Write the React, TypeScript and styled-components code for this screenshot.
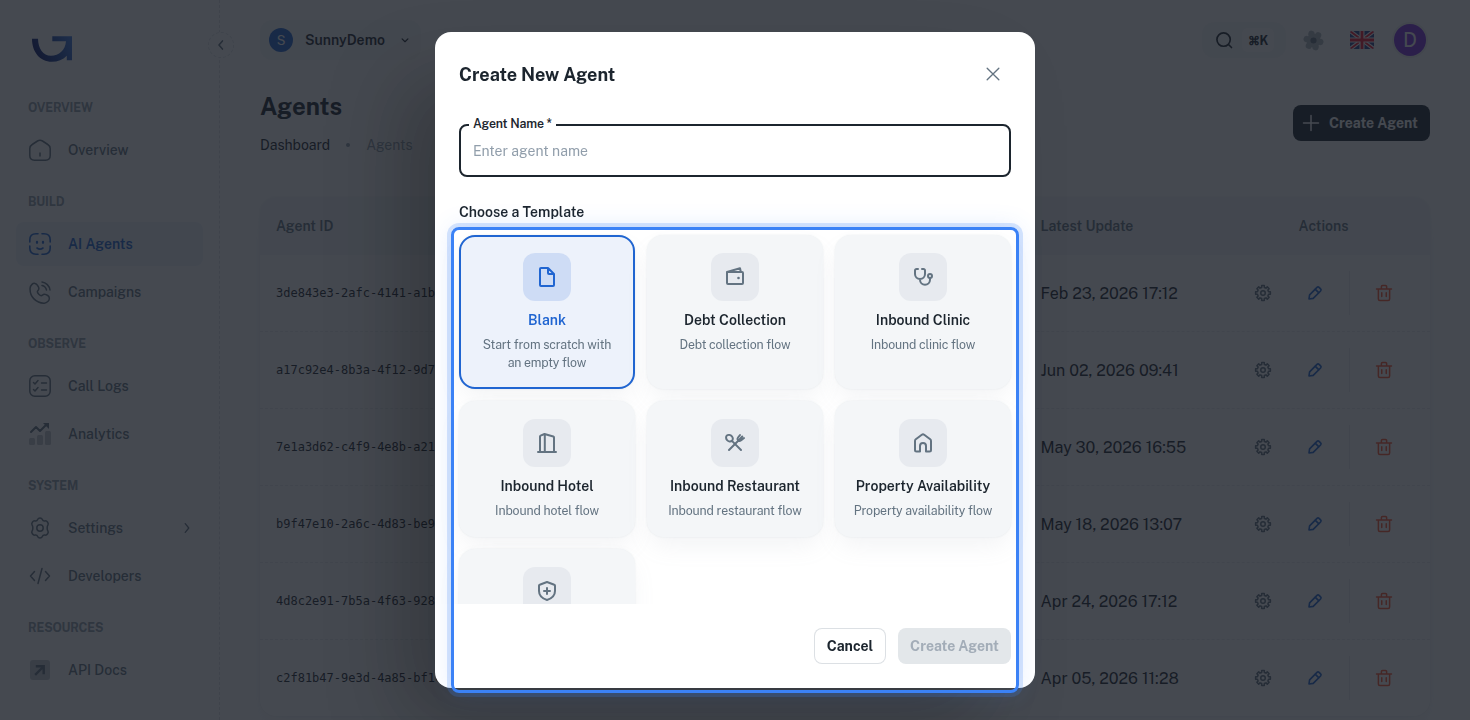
import React, { useState, ReactNode } from 'react';
import styled, { createGlobalStyle, css } from 'styled-components';

interface Template {
  id: string;
  name: string;
  description: string;
  icon: ReactNode;
}

interface Agent {
  id: string;
  updated: string;
}

interface NavEntry {
  label: string;
  icon: ReactNode;
  active?: boolean;
  expandable?: boolean;
}

interface NavGroup {
  title: string;
  items: NavEntry[];
}

const GlobalStyle = createGlobalStyle`
  * {
    box-sizing: border-box;
  }

  body {
    margin: 0;
    height: 100vh;
    overflow: hidden;
    background: #ffffff;
    color: #1c252e;
    font-family: 'Public Sans', Roboto, 'Liberation Sans', sans-serif;
    font-size: 14px;
  }

  button, input {
    font-family: inherit;
  }
`;

const smallText = css`
  font-size: 12.3px;
  letter-spacing: -0.14px;
`;

/* ---------- page ---------- */

const Page = styled.div`
  display: flex;
  height: 720px;
  overflow: hidden;
`;

const Sidebar = styled.aside`
  position: relative;
  width: 220px;
  flex-shrink: 0;
  padding: 0 16px;
  border-right: 1px dashed rgba(145, 158, 171, 0.3);
`;

const LogoArea = styled.div`
  height: 78px;
  padding: 36px 0 0 16px;
`;

const CollapseButton = styled.button`
  position: absolute;
  top: 32px;
  right: -15px;
  width: 26px;
  height: 26px;
  padding: 0;
  display: flex;
  align-items: center;
  justify-content: center;
  border-radius: 50%;
  border: 1px dashed rgba(145, 158, 171, 0.3);
  background: #ffffff;
  color: #637381;
`;

const NavTitle = styled.div`
  padding: 21px 12px 11px;
  ${smallText}
  line-height: 18px;
  font-weight: 700;
  color: #919eab;
`;

const NavList = styled.div`
  display: flex;
  flex-direction: column;
  gap: 4px;
`;

const NavItem = styled.a<{ $active?: boolean }>`
  display: flex;
  align-items: center;
  width: 187px;
  height: 44px;
  padding: 0 9px 0 12px;
  gap: 16px;
  border-radius: 8px;
  font-weight: 500;
  color: #637381;

  ${({ $active }) =>
    $active &&
    css`
      font-weight: 600;
      color: #2065d1;
      background: rgba(32, 101, 209, 0.08);
    `}
`;

const NavLabel = styled.span`
  flex: 1;
`;

const Main = styled.main`
  flex: 1;
  padding: 0 40px;
`;

const TopBar = styled.header`
  display: flex;
  align-items: center;
  justify-content: space-between;
  height: 80px;
`;

const Workspace = styled.button`
  display: flex;
  align-items: center;
  width: 161px;
  height: 40px;
  padding: 0 9px;
  gap: 12px;
  border: none;
  border-radius: 12px;
  background: rgba(145, 158, 171, 0.08);
  color: #1c252e;
`;

const WorkspaceName = styled.span`
  flex: 1;
  text-align: left;
  font-size: 14px;
  font-weight: 600;
`;

const Avatar = styled.span<{ $size: number; $color: string; $ring?: boolean }>`
  display: flex;
  align-items: center;
  justify-content: center;
  flex-shrink: 0;
  width: ${({ $size }) => $size}px;
  height: ${({ $size }) => $size}px;
  border-radius: 50%;
  font-size: ${({ $size }) => ($size > 24 ? 20 : 13)}px;
  font-weight: 400;
  color: #ffffff;
  background: ${({ $color }) => $color};
  box-shadow: ${({ $ring }) => ($ring ? '0 0 0 2px rgba(145, 158, 171, 0.16)' : 'none')};
`;

const TopActions = styled.div`
  display: flex;
  align-items: center;
  padding-right: 4px;
`;

const SearchButton = styled.button`
  display: flex;
  align-items: center;
  width: 84px;
  height: 36px;
  margin-right: 17px;
  padding: 0 12px;
  gap: 8px;
  border: none;
  border-radius: 12px;
  background: rgba(145, 158, 171, 0.08);
  color: #1c252e;
`;

const Shortcut = styled.kbd`
  width: 32px;
  height: 24px;
  flex-shrink: 0;
  border-radius: 6px;
  background: #ffffff;
  font-family: inherit;
  ${smallText}
  font-weight: 700;
  line-height: 25px;
  text-align: center;
`;

const FlagBox = styled.span`
  display: flex;
  margin: 0 20px 0 26px;
  border-radius: 2px;
  overflow: hidden;
`;

const PageHead = styled.div`
  display: flex;
  justify-content: space-between;
  height: 117px;
  padding-top: 8px;
`;

const PageTitle = styled.h1`
  margin: 0;
  font-size: 24px;
  line-height: 36px;
  font-weight: 700;
`;

const Breadcrumbs = styled.div`
  display: flex;
  align-items: center;
  gap: 16px;
  margin-top: 10px;
  line-height: 22px;
  color: #919eab;
`;

const Crumb = styled.span`
  color: #1c252e;
`;

const Dot = styled.i`
  width: 4px;
  height: 4px;
  border-radius: 50%;
  background: #919eab;
`;

const CreateButton = styled.button`
  display: flex;
  align-items: center;
  width: 137px;
  height: 36px;
  margin-top: 17px;
  padding: 0 0 0 8px;
  gap: 8px;
  border: none;
  border-radius: 8px;
  background: #1c252e;
  color: #ffffff;
  font-size: 14px;
  font-weight: 700;
`;

const TableCard = styled.section`
  width: 1170px;
  height: 519px;
  border-radius: 16px;
  overflow: hidden;
  background: #ffffff;
  box-shadow: 0 0 2px rgba(145, 158, 171, 0.2), 0 12px 24px -4px rgba(145, 158, 171, 0.12);
`;

const Row = styled.div<{ $head?: boolean }>`
  display: grid;
  grid-template-columns: 764.5px 192.5px 213px;
  align-items: center;
  height: ${({ $head }) => ($head ? 58 : 77)}px;
  border-bottom: ${({ $head }) => ($head ? 'none' : '1px dashed rgba(145, 158, 171, 0.2)')};

  &:last-child {
    border-bottom-color: transparent;
  }

  ${({ $head }) =>
    $head &&
    css`
      background: #f4f6f8;
      color: #637381;
      font-weight: 600;
    `}
`;

const Cell = styled.div<{ $center?: boolean }>`
  padding: 0 16px;
  text-align: ${({ $center }) => ($center ? 'center' : 'left')};
`;

const AgentId = styled(Cell)`
  font-family: 'DejaVu Sans Mono', monospace;
  font-size: 12px;
`;

const DateCell = styled(Cell)`
  font-size: 16px;
  white-space: nowrap;
`;

const RowActions = styled.div`
  display: flex;
  align-items: center;
  justify-content: center;
  gap: 16px;
`;

const IconButton = styled.button<{ $color: string }>`
  display: flex;
  align-items: center;
  justify-content: center;
  width: 36px;
  height: 36px;
  padding: 0;
  border: none;
  background: none;
  color: ${({ $color }) => $color};
`;

const Divider = styled.span`
  width: 1px;
  height: 44px;
  background: rgba(145, 158, 171, 0.2);
`;

/* ---------- dialog ---------- */

const Backdrop = styled.div`
  position: fixed;
  inset: 0;
  display: flex;
  align-items: center;
  justify-content: center;
  background: rgba(22, 28, 36, 0.8);
`;

const Dialog = styled.div`
  display: flex;
  flex-direction: column;
  width: 600px;
  height: 656px;
  border-radius: 16px;
  overflow: hidden;
  background: #ffffff;
  box-shadow: -40px 40px 80px -8px rgba(0, 0, 0, 0.24);
`;

const DialogHeader = styled.div`
  display: flex;
  align-items: center;
  justify-content: space-between;
  padding: 24px 24px 0;
  height: 60px;
`;

const DialogTitle = styled.h2`
  margin: 0;
  padding-top: 2px;
  font-size: 18px;
  line-height: 28px;
  font-weight: 700;
`;

const DialogBody = styled.div`
  flex: 1;
  padding: 32px 24px 0;
  overflow: hidden;
`;

const Field = styled.div`
  position: relative;
`;

const FieldLabel = styled.label`
  position: absolute;
  top: -8px;
  left: 10px;
  width: 87px;
  padding-left: 4px;
  background: #ffffff;
  ${smallText}
  line-height: 16px;
  font-weight: 600;
`;

const FieldInput = styled.input`
  display: block;
  width: 100%;
  height: 53px;
  padding: 0 12px;
  border: 2px solid #1c252e;
  border-radius: 8px;
  outline: none;
  font-size: 14px;

  &::placeholder {
    color: #919eab;
  }
`;

const SectionLabel = styled.div`
  margin: 24px 0 12px;
  font-size: 14px;
  line-height: 22px;
  font-weight: 600;
`;

const TemplateGrid = styled.div`
  display: grid;
  grid-template-columns: repeat(3, 176px);
  gap: 12px;
`;

const TemplateIcon = styled.span<{ $selected: boolean }>`
  display: flex;
  align-items: center;
  justify-content: center;
  width: 48px;
  height: 48px;
  border-radius: 12px;
  color: ${({ $selected }) => ($selected ? '#2065d1' : '#637381')};
  background: ${({ $selected }) => ($selected ? '#cedcf5' : '#e7eaef')};
`;

const TemplateName = styled.span<{ $selected: boolean }>`
  margin-top: 8px;
  font-size: 14px;
  line-height: 22px;
  font-weight: 600;
  white-space: nowrap;
  color: ${({ $selected }) => ($selected ? '#2065d1' : '#1c252e')};
`;

const TemplateText = styled.span`
  margin: 5px 0 -1px;
  ${smallText}
  line-height: 18px;
  color: #637381;
`;

const TemplateCard = styled.div<{ $selected: boolean }>`
  display: flex;
  flex-direction: column;
  align-items: center;
  padding: 16px;
  border: 2px solid ${({ $selected }) => ($selected ? '#2065d1' : 'transparent')};
  border-radius: 16px;
  background: ${({ $selected }) => ($selected ? '#edf2fb' : '#f4f6f8')};
  box-shadow: 0 0 2px rgba(145, 158, 171, 0.2), 0 12px 24px -4px rgba(145, 158, 171, 0.12);
  text-align: center;
  cursor: pointer;
`;

const DialogFooter = styled.div`
  display: flex;
  justify-content: flex-end;
  gap: 12px;
  padding: 24px;
`;

const FooterButton = styled.button<{ $width: number }>`
  width: ${({ $width }) => $width}px;
  height: 36px;
  padding: 0;
  border: 1px solid rgba(145, 158, 171, 0.32);
  border-radius: 8px;
  background: #ffffff;
  color: #1c252e;
  font-size: 14px;
  font-weight: 700;

  &:disabled {
    border-color: transparent;
    background: #e3e7ea;
    color: #a3adb8;
  }
`;

const FocusRing = styled.div`
  position: fixed;
  top: 227px;
  left: 451px;
  width: 568px;
  height: 466px;
  border: 3px solid #3b82f6;
  border-radius: 8px;
  box-shadow: 0 0 0 4px rgba(59, 130, 246, 0.2), 0 0 24px rgba(59, 130, 246, 0.15);
  pointer-events: none;
`;

/* ---------- icons ---------- */

interface IconProps {
  size?: number;
  width?: number;
  children: ReactNode;
}

const Icon: React.FC<IconProps> = ({ size = 24, width = 1.5, children }) => (
  <svg
    width={size}
    height={size}
    viewBox="0 0 24 24"
    fill="none"
    stroke="currentColor"
    strokeWidth={width}
    strokeLinecap="round"
    strokeLinejoin="round"
  >
    {children}
  </svg>
);

const Logo = () => (
  <svg width="40" height="26" viewBox="0 0 40 26">
    <defs>
      <linearGradient id="logo" x1="0" y1="0.6" x2="1" y2="0.3">
        <stop offset="0" stopColor="#0a1266" />
        <stop offset="0.5" stopColor="#173f9c" />
        <stop offset="1" stopColor="#3a74dc" />
      </linearGradient>
    </defs>
    <path
      fill="url(#logo)"
      d="M0 2.800h6C6.300 13 11 19.800 19 19.800c8 0 14.500-6 15-14.600H20.300V.2H40V24.200h-5.200v-4.400c-4 4-9 6-15 6C8 25.800 0 16 0 2.800z"
    />
  </svg>
);

// outline of a gear with eight square teeth, centred on 12,12
const toothOffsets: [number, number][] = [
  [-13.5, 7.6],
  [-10, 10],
  [10, 10],
  [13.5, 7.6],
];

const gearPoints = Array.from({ length: 8 })
  .flatMap((_, i) =>
    toothOffsets.map(([offset, radius]) => {
      const angle = ((i * 45 + offset) * Math.PI) / 180;
      return `${(12 + radius * Math.cos(angle)).toFixed(2)},${(12 + radius * Math.sin(angle)).toFixed(2)}`;
    })
  )
  .join(' ');

const CogIcon = () => (
  <Icon size={18} width={2}>
    <circle cx="12" cy="12" r="3" />
    <polygon points={gearPoints} />
  </Icon>
);

const PencilIcon = () => (
  <Icon size={16} width={2.500}>
    <path d="M3 21l.9-6.300L15 3.600c1-1 2.100-1 3.100 0l2.300 2.300c1 1 1 2.100 0 3.100L9.300 20.100z" />
    <path d="M12.500 6.500l5 5" />
  </Icon>
);

const TrashIcon = () => (
  <Icon size={18} width={2}>
    <path d="M2 6.500h20M4.500 6.500V20a2 2 0 0 0 2 2h11a2 2 0 0 0 2-2V6.500M8.500 6V3.500A1.500 1.500 0 0 1 10 2h4a1.500 1.500 0 0 1 1.500 1.500V6M9 11.500v5M15 11.500v5" />
  </Icon>
);

const FlagIcon = () => (
  <svg width="24" height="18" viewBox="0 0 24 18">
    <rect width="24" height="18" fill="#24408e" />
    <path d="M0 0l24 18M24 0L0 18" stroke="#ffffff" strokeWidth="4" />
    <path d="M0 0l24 18M24 0L0 18" stroke="#f0142f" strokeWidth="1.800" />
    <path d="M12 0v18M0 9h24" stroke="#ffffff" strokeWidth="5" />
    <path d="M12 0v18M0 9h24" stroke="#f0142f" strokeWidth="2.800" />
  </svg>
);

const navGroups: NavGroup[] = [
  {
    title: 'OVERVIEW',
    items: [
      {
        label: 'Overview',
        icon: (
          <Icon>
            <path d="M1.800 10.500c0-1.800.8-3 2.400-4L9.500 3c1.800-1.100 3.200-1.100 5 0l5.300 3.500c1.600 1 2.400 2.200 2.400 4v7c0 3-1.700 4.700-4.700 4.700h-11c-3 0-4.700-1.700-4.700-4.700zM12 15v3" />
          </Icon>
        ),
      },
    ],
  },
  {
    title: 'BUILD',
    items: [
      {
        label: 'AI Agents',
        active: true,
        icon: (
          <Icon width={1.600}>
            <path d="M10 1.800H8c-4.500 0-6.200 1.700-6.200 6.200v2M14 1.800h2c4.500 0 6.200 1.700 6.200 6.200v2M10 22.200H8c-4.500 0-6.200-1.700-6.200-6.200v-2M14 22.200h2c4.500 0 6.200-1.700 6.200-6.200v-2M9 16c1.800 1.300 4.200 1.300 6 0" />
            <path d="M9 9.800v1M15 9.800v1" strokeWidth="2.200" />
          </Icon>
        ),
      },
      {
        label: 'Campaigns',
        icon: (
          <Icon>
            <path d="M14 2c4 .4 7.500 4 8 8M14 5.500c2.300.4 4 2.200 4.500 4.500M9.500 5.300l.9 1.600c.7 1.300.4 2.800-.6 3.800 0 0-1.200 1.300 1 3.500s3.500 1 3.500 1c1-1 2.500-1.300 3.800-.6l1.600.9c2 1.200 2.200 4 .4 5.800-1 1-2.300 1.900-3.800 1.900-2.400.1-6.500-.5-10.600-4.600S2 10.500 2.100 8.100C2.200 6.700 3 5.400 4 4.400c1.700-1.700 4.300-1.200 5.500.9z" />
          </Icon>
        ),
      },
    ],
  },
  {
    title: 'OBSERVE',
    items: [
      {
        label: 'Call Logs',
        icon: (
          <Icon>
            <rect x="1.800" y="1.800" width="20.400" height="20.400" rx="5" />
            <path d="M5.500 8.500l1.500 1.500 3-3.500M5.500 15.500L7 17l3-3.500M13.500 9h5M13.500 16h5" />
          </Icon>
        ),
      },
      {
        label: 'Analytics',
        icon: (
          <Icon>
            <g fill="currentColor" stroke="none" opacity="0.4">
              <rect x="1" y="16" width="6" height="7" rx="1.500" />
              <rect x="9" y="13" width="6" height="10" rx="1.500" />
              <rect x="17" y="9" width="6" height="14" rx="1.500" />
            </g>
            <path d="M3 10l5-5 4 4 6-6" strokeWidth="2" />
            <path d="M15 1h6v6z" fill="currentColor" stroke="none" />
          </Icon>
        ),
      },
    ],
  },
  {
    title: 'SYSTEM',
    items: [
      {
        label: 'Settings',
        expandable: true,
        icon: (
          <Icon>
            <circle cx="12" cy="12" r="3.200" />
            <path d="M9.800 3.200c.6-1.600 3.800-1.600 4.400 0 .5 1.400 1.500 2 3 1.700 1.800-.3 3.800 2.600 2.700 4.100-1 1.300-1 4.700 0 6 1.100 1.500-.9 4.400-2.700 4.100-1.500-.3-2.500.3-3 1.700-.6 1.600-3.800 1.600-4.400 0-.5-1.400-1.500-2-3-1.700-1.800.3-3.800-2.600-2.700-4.100 1-1.300 1-4.700 0-6C3 7.500 5 4.600 6.800 4.900c1.500.3 2.500-.3 3-1.700z" />
          </Icon>
        ),
      },
      {
        label: 'Developers',
        icon: (
          <Icon>
            <path d="M6.500 7.500L2.500 12l4 4.500M17.500 7.500l4 4.500-4 4.500M14 4.500l-4 15" />
          </Icon>
        ),
      },
    ],
  },
  {
    title: 'RESOURCES',
    items: [
      {
        label: 'API Docs',
        icon: (
          <Icon>
            <rect x="2" y="2" width="20" height="20" rx="3" fill="currentColor" stroke="none" opacity="0.4" />
            <path d="M8 16l7-7M9 8.300h6.700V15" strokeWidth="2.400" strokeLinecap="square" strokeLinejoin="miter" />
          </Icon>
        ),
      },
    ],
  },
];

const agents: Agent[] = [
  { id: '3de843e3-2afc-4141-a1b', updated: 'Feb 23, 2026 17:12' },
  { id: 'a17c92e4-8b3a-4f12-9d7', updated: 'Jun 02, 2026 09:41' },
  { id: '7e1a3d62-c4f9-4e8b-a21', updated: 'May 30, 2026 16:55' },
  { id: 'b9f47e10-2a6c-4d83-be9', updated: 'May 18, 2026 13:07' },
  { id: '4d8c2e91-7b5a-4f63-928', updated: 'Apr 24, 2026 17:12' },
  { id: 'c2f81b47-9e3d-4a85-bf1c', updated: 'Apr 05, 2026 11:28' },
];

const templates: Template[] = [
  {
    id: 'blank',
    name: 'Blank',
    description: 'Start from scratch with an empty flow',
    icon: <path d="M13 3H6a1 1 0 0 0-1 1v16a1 1 0 0 0 1 1h12a1 1 0 0 0 1-1V9l-6-6v5a1 1 0 0 0 1 1h5" />,
  },
  {
    id: 'debt',
    name: 'Debt Collection',
    description: 'Debt collection flow',
    icon: (
      <>
        <path d="M4 7h15a1 1 0 0 1 1 1v10a1 1 0 0 1-1 1H5a1 1 0 0 1-1-1V7l13-3.700.8 3.400" />
        <circle cx="15.500" cy="13" r="1.300" fill="currentColor" stroke="none" />
      </>
    ),
  },
  {
    id: 'clinic',
    name: 'Inbound Clinic',
    description: 'Inbound clinic flow',
    icon: (
      <>
        <path d="M7 4H5.500A1.500 1.500 0 0 0 4 5.500V9a5 5 0 0 0 10 0V5.500A1.500 1.500 0 0 0 12.500 4H11M9 14v.7a5 5 0 0 0 10 0V13" />
        <circle cx="19" cy="11" r="2" />
      </>
    ),
  },
  {
    id: 'hotel',
    name: 'Inbound Hotel',
    description: 'Inbound hotel flow',
    icon: <path d="M3 21h18M5 21V5.600a1 1 0 0 1 .6-.9L9.500 3l8.800 2.500a1 1 0 0 1 .7 1V21M9.800 3.500V21" />,
  },
  {
    id: 'restaurant',
    name: 'Inbound Restaurant',
    description: 'Inbound restaurant flow',
    icon: (
      <>
        <path d="M8.900 9.900c-1.300 1-3.500.6-4.800-.8S2.700 5.400 3.900 4.500 7.600 4 8.900 5.400s1.200 3.400 0 4.500zL18 19" />
        <path d="M6 19L15.500 9.500M17 4l-2 2.500c-.8 1-.8 2 0 2.900s2 .9 2.900 0L21 7M19.300 5.500L16 9" />
      </>
    ),
  },
  {
    id: 'property',
    name: 'Property Availability',
    description: 'Property availability flow',
    icon: (
      <path d="M4 9.900a2 2 0 0 1 .8-1.600l6-4.500a2 2 0 0 1 2.400 0l6 4.500a2 2 0 0 1 .8 1.600V19a1.500 1.500 0 0 1-1.500 1.500H15V15a3 3 0 0 0-6 0v5.500H5.500A1.500 1.500 0 0 1 4 19z" />
    ),
  },
  {
    id: 'insurance',
    name: '',
    description: '',
    icon: <path d="M12 3l7.300 2.700a1 1 0 0 1 .7 1V12c0 4.500-3.500 7.500-8 9-4.500-1.500-8-4.500-8-9V6.700a1 1 0 0 1 .7-1zM12 9v6M9 12h6" />,
  },
];

const App: React.FC = () => {
  const [selected, setSelected] = useState<string>('blank');

  return (
    <>
      <GlobalStyle />
      <Page>
        <Sidebar>
          <LogoArea>
            <Logo />
          </LogoArea>
          {navGroups.map((group) => (
            <React.Fragment key={group.title}>
              <NavTitle>{group.title}</NavTitle>
              <NavList>
                {group.items.map((item) => (
                  <NavItem key={item.label} $active={item.active}>
                    {item.icon}
                    <NavLabel>{item.label}</NavLabel>
                    {item.expandable && (
                      <Icon size={14} width={2.200}>
                        <path d="M9 4.500l6 7.500-6 7.500" />
                      </Icon>
                    )}
                  </NavItem>
                ))}
              </NavList>
            </React.Fragment>
          ))}
          <CollapseButton>
            <Icon size={14} width={2.600}>
              <path d="M14.500 5l-6 7 6 7" />
            </Icon>
          </CollapseButton>
        </Sidebar>

        <Main>
          <TopBar>
            <Workspace>
              <Avatar $size={24} $color="#2065d1">S</Avatar>
              <WorkspaceName>SunnyDemo</WorkspaceName>
              <Icon size={14} width={2}>
                <path d="M7 10l5 5 5-5" />
              </Icon>
            </Workspace>
            <TopActions>
              <SearchButton>
                <Icon size={20} width={2}>
                  <circle cx="11.500" cy="11.500" r="8" />
                  <path d="M18 18l3 3" />
                </Icon>
                <Shortcut>⌘K</Shortcut>
              </SearchButton>
              <svg width="21" height="21" viewBox="0 0 24 24" fill="#637381">
                <g opacity="0.5" transform="rotate(12 12 12)">
                  <circle cx="12" cy="12" r="8" />
                  <circle cx="8" cy="5" r="3.600" />
                  <circle cx="16" cy="5" r="3.600" />
                  <circle cx="20" cy="12" r="3.600" />
                  <circle cx="16" cy="19" r="3.600" />
                  <circle cx="8" cy="19" r="3.600" />
                  <circle cx="4" cy="12" r="3.600" />
                </g>
                <circle cx="12" cy="12" r="3.500" />
              </svg>
              <FlagBox>
                <FlagIcon />
              </FlagBox>
              <Avatar $size={32} $color="#7c2fe0" $ring>D</Avatar>
            </TopActions>
          </TopBar>

          <PageHead>
            <div>
              <PageTitle>Agents</PageTitle>
              <Breadcrumbs>
                <Crumb>Dashboard</Crumb>
                <Dot />
                <span>Agents</span>
              </Breadcrumbs>
            </div>
            <CreateButton>
              <Icon size={20} width={1.800}>
                <path d="M12 3v18M3 12h18" />
              </Icon>
              Create Agent
            </CreateButton>
          </PageHead>

          <TableCard>
            <Row $head>
              <Cell>Agent ID</Cell>
              <Cell>Latest Update</Cell>
              <Cell $center>Actions</Cell>
            </Row>
            {agents.map((agent) => (
              <Row key={agent.id}>
                <AgentId>{agent.id}</AgentId>
                <DateCell>{agent.updated}</DateCell>
                <RowActions>
                  <IconButton $color="#637381"><CogIcon /></IconButton>
                  <IconButton $color="#2065d1"><PencilIcon /></IconButton>
                  <Divider />
                  <IconButton $color="#ff5630"><TrashIcon /></IconButton>
                </RowActions>
              </Row>
            ))}
          </TableCard>
        </Main>
      </Page>

      <Backdrop>
        <Dialog role="dialog">
          <DialogHeader>
            <DialogTitle>Create New Agent</DialogTitle>
            <IconButton $color="#637381">
              <Icon size={20} width={1.600}>
                <path d="M5 5l14 14M19 5L5 19" />
              </Icon>
            </IconButton>
          </DialogHeader>
          <DialogBody>
            <Field>
              <FieldInput placeholder="Enter agent name" />
              <FieldLabel>Agent Name *</FieldLabel>
            </Field>
            <SectionLabel>Choose a Template</SectionLabel>
            <TemplateGrid>
              {templates.map((template) => (
                <TemplateCard
                  key={template.id}
                  $selected={template.id === selected}
                  onClick={() => setSelected(template.id)}
                >
                  <TemplateIcon $selected={template.id === selected}>
                    <Icon width={2}>{template.icon}</Icon>
                  </TemplateIcon>
                  <TemplateName $selected={template.id === selected}>{template.name}</TemplateName>
                  <TemplateText>{template.description}</TemplateText>
                </TemplateCard>
              ))}
            </TemplateGrid>
          </DialogBody>
          <DialogFooter>
            <FooterButton $width={72}>Cancel</FooterButton>
            <FooterButton $width={113} disabled>Create Agent</FooterButton>
          </DialogFooter>
        </Dialog>
      </Backdrop>
      <FocusRing />
    </>
  );
};

export default App;
